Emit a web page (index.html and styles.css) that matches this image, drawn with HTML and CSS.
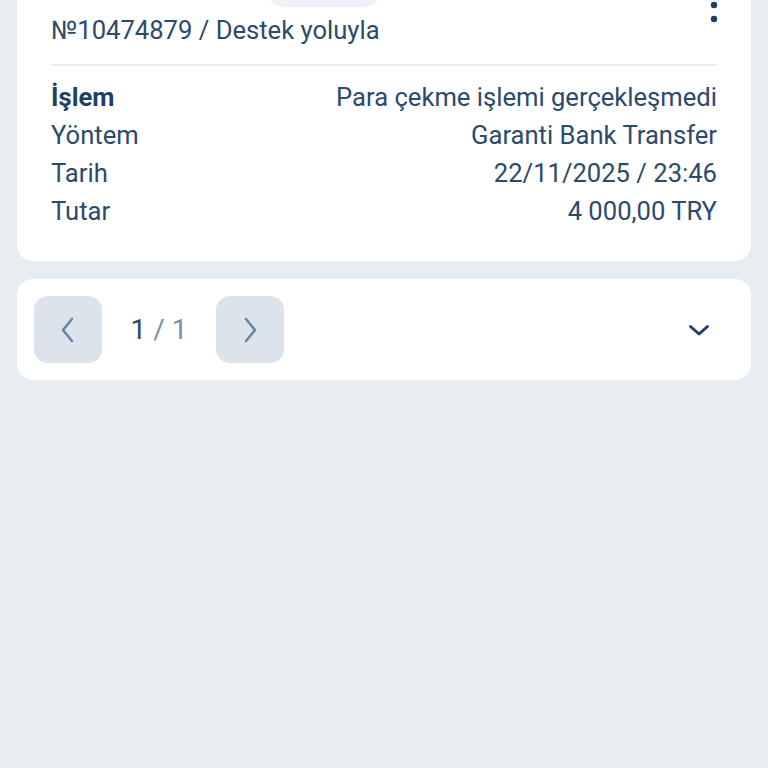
FILE: index.html
```html
<!DOCTYPE html>
<html lang="tr">
<head>
<meta charset="utf-8">
<link rel="stylesheet" href="styles.css">
</head>
<body>
<div class="page">
  <section class="card card-tx">
    <div class="tx-top">
      <span class="status-pill"></span>
    </div>
    <button class="kebab" aria-label="menu">
      <svg width="8" height="36" viewBox="0 0 8 36"><circle cx="4" cy="4" r="3.2" fill="#1f3f63"/><circle cx="4" cy="18" r="3.2" fill="#1f3f63"/><circle cx="4" cy="32" r="3.2" fill="#1f3f63"/></svg>
    </button>
    <div class="tx-title">№10474879 / Destek yoluyla</div>
    <div class="divider"></div>
    <div class="rows">
      <div class="row"><span class="label strong">İşlem</span><span class="value">Para çekme işlemi gerçekleşmedi</span></div>
      <div class="row"><span class="label">Yöntem</span><span class="value">Garanti Bank Transfer</span></div>
      <div class="row"><span class="label">Tarih</span><span class="value">22/11/2025 / 23:46</span></div>
      <div class="row"><span class="label">Tutar</span><span class="value">4 000,00 TRY</span></div>
    </div>
  </section>

  <section class="card pager">
    <button class="page-btn" aria-label="prev">
      <svg width="20" height="28" viewBox="0 0 20 28"><path d="M14 3 L5 14 L14 25" fill="none" stroke="#6886a8" stroke-width="2.6" stroke-linecap="round" stroke-linejoin="round"/></svg>
    </button>
    <div class="page-count"><span class="cur">1</span><span class="sep"> / 1</span></div>
    <button class="page-btn" aria-label="next">
      <svg width="20" height="28" viewBox="0 0 20 28"><path d="M6 3 L15 14 L6 25" fill="none" stroke="#6886a8" stroke-width="2.6" stroke-linecap="round" stroke-linejoin="round"/></svg>
    </button>
    <button class="expand" aria-label="expand">
      <svg width="22" height="14" viewBox="0 0 22 14"><path d="M2.5 3.5 L11 11 L19.5 3.5" fill="none" stroke="#1f3f63" stroke-width="3" stroke-linecap="round" stroke-linejoin="round"/></svg>
    </button>
  </section>
</div>
</body>
</html>
```

FILE: styles.css
```css
html, body {
  margin: 0;
  padding: 0;
  background: #e8edf2;
  font-family: Roboto, "Noto Sans", "Liberation Sans", sans-serif;
  color: #2c4a6b;
}
.page {
  padding: 0 17px;
  display: flex;
  flex-direction: column;
  gap: 18px;
}
.card {
  background: #ffffff;
  border-radius: 16px;
}
.card-tx {
  position: relative;
  margin-top: -40px;
  padding: 0 34px 31px;
}
.tx-top {
  height: 47px;
  display: flex;
  align-items: flex-end;
}
.status-pill {
  display: block;
  width: 112px;
  height: 30px;
  margin-left: 217px;
  background: #eef1f5;
  border-radius: 15px;
}
.kebab {
  position: absolute;
  top: 27px;
  right: 33px;
  border: 0;
  padding: 0;
  background: none;
  width: 8px;
  height: 36px;
}
.kebab svg { display: block; }
.tx-title {
  margin-top: 9px;
  font-size: 25.6px;
  line-height: 28px;
  color: #2c4a6b;
}
.divider {
  margin-top: 20px;
  height: 2px;
  background: #e8edf2;
}
.rows {
  margin-top: 12px;
  display: flex;
  flex-direction: column;
}
.row {
  display: flex;
  justify-content: space-between;
  align-items: center;
  height: 38px;
  font-size: 25.6px;
}
.label.strong {
  font-weight: 700;
  color: #1f3f63;
}
.value { text-align: right; }
.pager {
  display: flex;
  align-items: center;
  padding: 17px;
  height: 67px;
}
.page-btn {
  width: 68px;
  height: 67px;
  border: 0;
  border-radius: 14px;
  background: #dce3ea;
  display: flex;
  align-items: center;
  justify-content: center;
  padding: 0;
}
.page-btn svg { display: block; }
.page-count {
  width: 114px;
  text-align: center;
  font-size: 28px;
}
.page-count .cur { color: #2c4a6b; }
.page-count .sep { color: #7b90a7; }
.expand {
  margin-left: auto;
  margin-right: 24px;
  border: 0;
  padding: 0;
  background: none;
  display: flex;
}
```
